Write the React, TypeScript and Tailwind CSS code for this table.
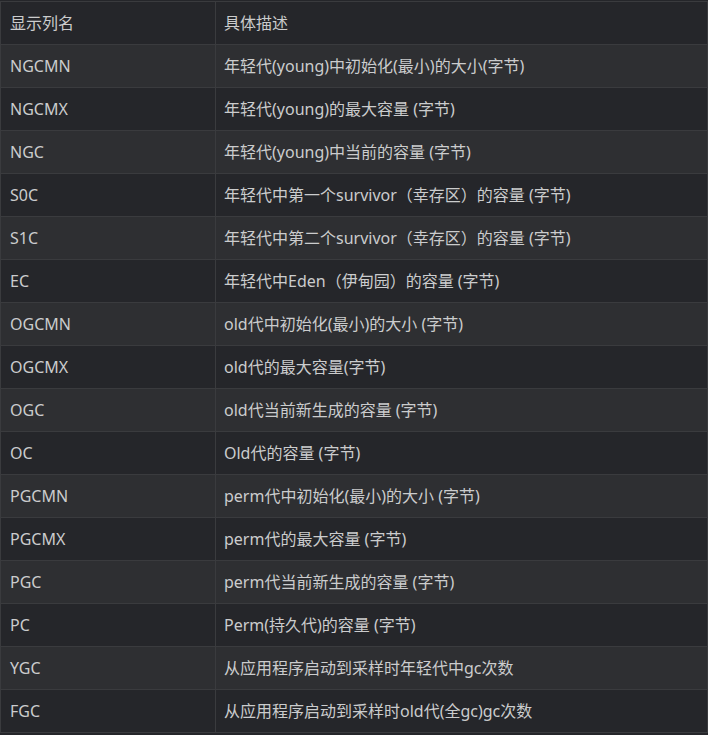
const rows: [string, string][] = [
  ['NGCMN', '年轻代(young)中初始化(最小)的大小(字节)'],
  ['NGCMX', '年轻代(young)的最大容量 (字节)'],
  ['NGC', '年轻代(young)中当前的容量 (字节)'],
  ['S0C', '年轻代中第一个survivor（幸存区）的容量 (字节)'],
  ['S1C', '年轻代中第二个survivor（幸存区）的容量 (字节)'],
  ['EC', '年轻代中Eden（伊甸园）的容量 (字节)'],
  ['OGCMN', 'old代中初始化(最小)的大小 (字节)'],
  ['OGCMX', 'old代的最大容量(字节)'],
  ['OGC', 'old代当前新生成的容量 (字节)'],
  ['OC', 'Old代的容量 (字节)'],
  ['PGCMN', 'perm代中初始化(最小)的大小 (字节)'],
  ['PGCMX', 'perm代的最大容量 (字节)'],
  ['PGC', 'perm代当前新生成的容量 (字节)'],
  ['PC', 'Perm(持久代)的容量 (字节)'],
  ['YGC', '从应用程序启动到采样时年轻代中gc次数'],
  ['FGC', '从应用程序启动到采样时old代(全gc)gc次数'],
]

export default function App() {
  return (
    <div
      className="min-h-[735px] w-[708px] bg-[#25262a] pt-px text-[16px] text-[#cbcccd]"
      style={{ fontFamily: '"Noto Sans", "Noto Sans CJK SC", sans-serif' }}
    >
      <table className="w-full border-collapse">
        <thead>
          <tr className="h-[43px] bg-[#25262a]">
            <th className="w-[215px] border border-[#3a3b3e] px-[9px] text-left font-normal">显示列名</th>
            <th className="border border-[#3a3b3e] px-[8px] text-left font-normal">具体描述</th>
          </tr>
        </thead>
        <tbody>
          {rows.map(([k, v], i) => (
            <tr key={k} className={'h-[43px] ' + (i % 2 === 0 ? 'bg-[#2e2f32]' : 'bg-[#25262a]')}>
              <td className="border border-[#3a3b3e] px-[9px]">{k}</td>
              <td className="border border-[#3a3b3e] px-[8px]">{v}</td>
            </tr>
          ))}
        </tbody>
      </table>
    </div>
  )
}
